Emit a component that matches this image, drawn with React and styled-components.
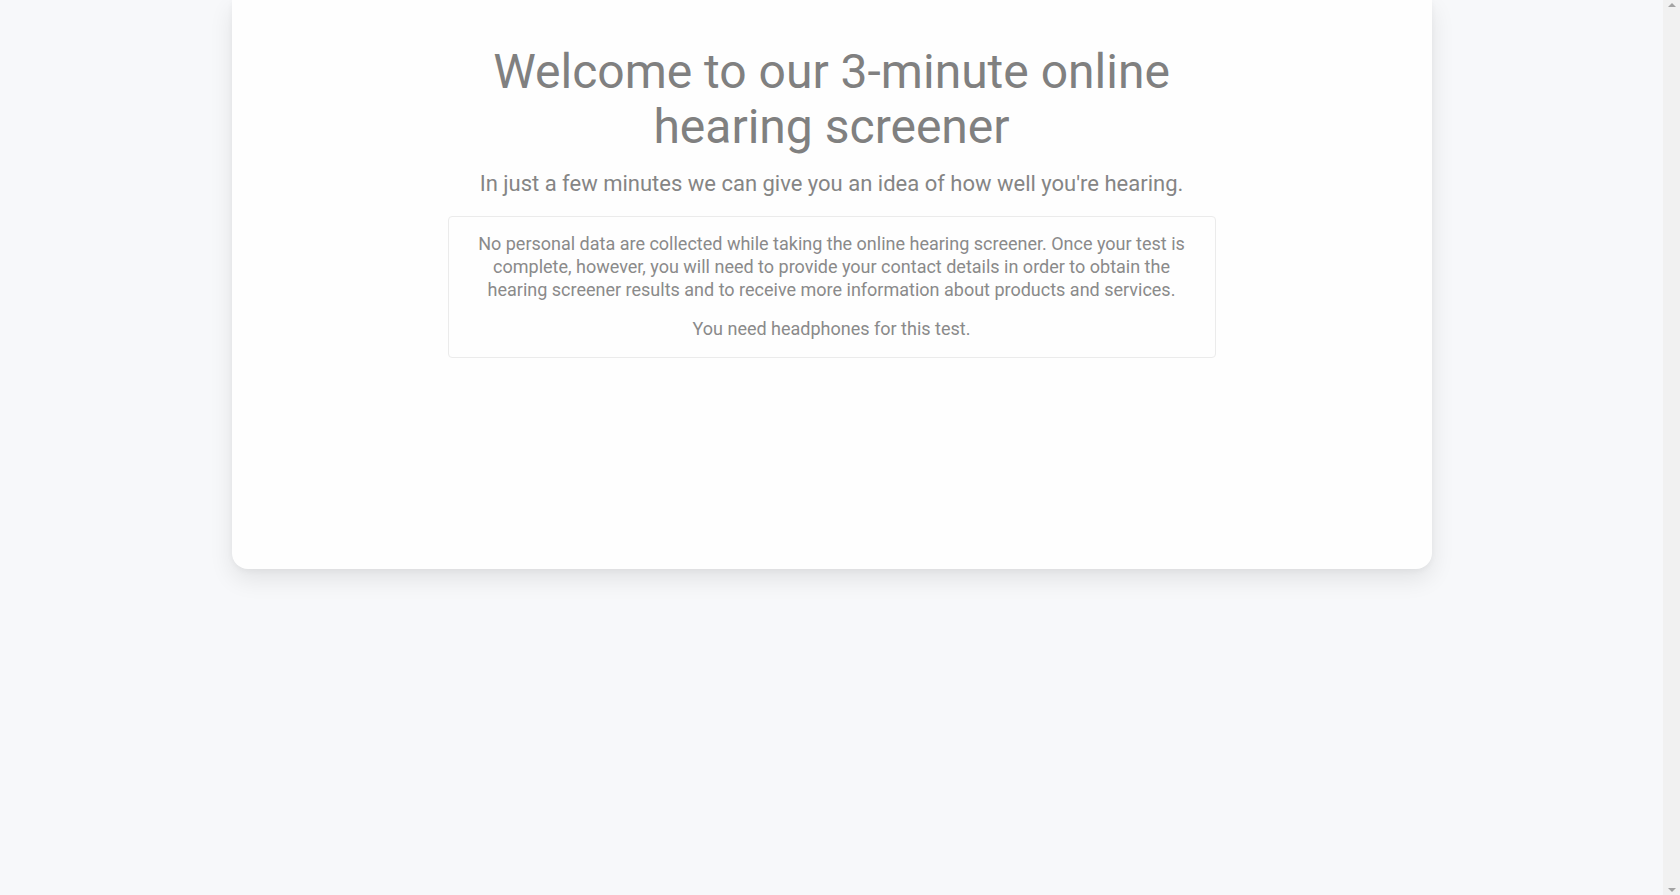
import React from "react";
import styled, { createGlobalStyle } from "styled-components";

const Global = createGlobalStyle`
  html, body { overflow: hidden; }
  body {
    margin: 0;
    background: #f7f8fa;
    font-family: Roboto, "Liberation Sans", Arial, sans-serif;
    color: #808080;
  }
`;

const Shell = styled.div`
  display: grid;
  grid-template-columns: 1fr 17px;
  height: 100vh;
`;

const Page = styled.main`
  display: flex;
  justify-content: center;
  align-items: flex-start;
  overflow: hidden;
`;

const ScrollTrack = styled.div`
  background: #f1f1f1;
  display: flex;
  flex-direction: column;
  justify-content: space-between;
  align-items: center;
  padding: 3px 0 3px;
`;

const Arrow = styled.span`
  width: 0;
  height: 0;
  border-left: 4px solid transparent;
  border-right: 4px solid transparent;
  ${(p) =>
    p.$down
      ? "border-top: 4px solid #a3a3a3;"
      : "border-bottom: 4px solid #a3a3a3;"}
`;

const Card = styled.section`
  width: 1200px;
  height: 569px;
  box-sizing: border-box;
  background: #fefefe;
  border-radius: 0 0 16px 16px;
  box-shadow: 0 10px 24px rgba(0, 0, 0, 0.09), 0 2px 6px rgba(0, 0, 0, 0.04);
  display: flex;
  justify-content: center;
  padding-top: 44px;
`;

const Column = styled.div`
  width: 768px;
  display: flex;
  flex-direction: column;
  align-items: center;
  text-align: center;
`;

const Title = styled.h1`
  margin: 0;
  font-size: 48px;
  line-height: 55px;
  font-weight: 400;
  color: #808080;
`;

const Subtitle = styled.p`
  margin: 17px 0 0;
  font-size: 22px;
  line-height: 26px;
  color: #858585;
`;

const InfoBox = styled.div`
  margin-top: 19px;
  width: 768px;
  box-sizing: border-box;
  border: 1px solid #ebebeb;
  border-radius: 4px;
  padding: 15px 28px 17px;
  display: flex;
  flex-direction: column;
  gap: 16px;
`;

const InfoText = styled.p`
  margin: 0;
  font-size: 18px;
  line-height: 23px;
  color: #8a8a8a;
`;

export default function App() {
  return (
    <>
      <Global />
      <Shell>
        <Page>
          <Card>
            <Column>
              <Title>Welcome to our 3-minute online hearing screener</Title>
              <Subtitle>
                In just a few minutes we can give you an idea of how well you're hearing.
              </Subtitle>
              <InfoBox>
                <InfoText>
                  No personal data are collected while taking the online hearing screener. Once
                  your test is complete, however, you will need to provide your contact details in
                  order to obtain the hearing screener results and to receive more information
                  about products and services.
                </InfoText>
                <InfoText>You need headphones for this test.</InfoText>
              </InfoBox>
            </Column>
          </Card>
        </Page>
        <ScrollTrack aria-hidden="true">
          <Arrow />
          <Arrow $down />
        </ScrollTrack>
      </Shell>
    </>
  );
}
